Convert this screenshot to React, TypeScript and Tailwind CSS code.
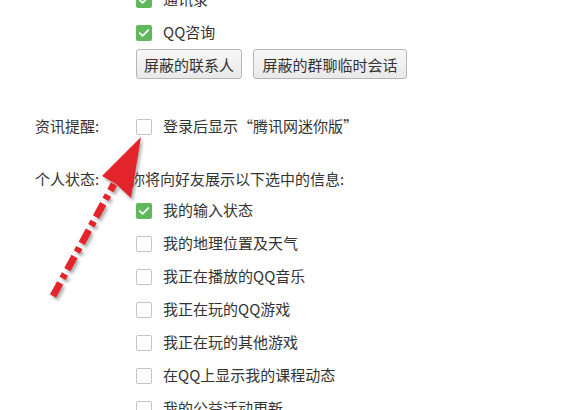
import { ReactNode } from "react";

const Box = ({ checked }: { checked?: boolean }) =>
  checked ? (
    <span className="flex h-[16px] w-[16px] shrink-0 items-center justify-center rounded-[2px] bg-[#5fb85c]">
      <svg viewBox="0 0 16 16" className="h-[14px] w-[14px]">
        <path d="M3.2 8.2 6.4 11.2 12.8 4.6" fill="none" stroke="#fff" strokeWidth="2" strokeLinecap="round" strokeLinejoin="round" />
      </svg>
    </span>
  ) : (
    <span className="h-[16px] w-[16px] shrink-0 rounded-[2px] border border-[#c4c4c4] bg-white" />
  );

const Row = ({ checked, children }: { checked?: boolean; children: ReactNode }) => (
  <div className="flex h-[33px] items-center gap-[11px]">
    <Box checked={checked} />
    <span>{children}</span>
  </div>
);

const status = [
  { label: "我的输入状态", checked: true },
  { label: "我的地理位置及天气" },
  { label: "我正在播放的QQ音乐" },
  { label: "我正在玩的QQ游戏" },
  { label: "我正在玩的其他游戏" },
  { label: "在QQ上显示我的课程动态" },
  { label: "我的公益活动更新" },
];

const App = () => {
  return (
    <div
      className="relative h-[410px] w-[580px] overflow-hidden bg-white text-[15px] text-[#333]"
      style={{ fontFamily: '"Noto Sans CJK SC", "Noto Sans", sans-serif' }}
    >
      <div className="ml-[136px] -mt-[17px]">
        <Row checked>通讯录</Row>
        <Row checked>QQ咨询</Row>
        <div className="flex gap-[11px]">
          <button className="h-[30px] w-[106px] rounded-[3px] border border-[#b5b5b5] bg-gradient-to-b from-[#f7f7f7] to-[#e9e9e9] leading-none">
            屏蔽的联系人
          </button>
          <button className="h-[30px] w-[154px] rounded-[3px] border border-[#b5b5b5] bg-gradient-to-b from-[#f7f7f7] to-[#e9e9e9] leading-none">
            屏蔽的群聊临时会话
          </button>
        </div>
      </div>

      <div className="mt-[31px] flex h-[33px] items-center pl-[35px]">
        <span className="w-[101px]">资讯提醒:</span>
        <Row>登录后显示“腾讯网迷你版”</Row>
      </div>

      <div className="mt-[20px] flex h-[33px] items-center pl-[35px]">
        <span className="w-[95px]">个人状态:</span>
        <span>你将向好友展示以下选中的信息:</span>
      </div>

      <div className="-mt-[2px] ml-[136px]">
        {status.map((s) => (
          <Row key={s.label} checked={s.checked}>
            {s.label}
          </Row>
        ))}
      </div>

      <svg className="pointer-events-none absolute left-0 top-0" width="580" height="410" viewBox="0 0 580 410">
        <defs>
          <filter id="sh" x="-20%" y="-20%" width="140%" height="140%">
            <feGaussianBlur stdDeviation="1.6" />
          </filter>
        </defs>
        <g transform="translate(2 3)" opacity="0.45" filter="url(#sh)">
          <line x1="53" y1="296" x2="114" y2="184" stroke="#555" strokeWidth="7" strokeDasharray="15 5 5 5" />
          <path d="M141 137 L102 176 L116 184 L131 198 Z" fill="#555" />
        </g>
        <line x1="53" y1="296" x2="114" y2="184" stroke="#e3242b" strokeWidth="7" strokeDasharray="15 5 5 5" />
        <path d="M141 137 L102 176 L116 184 L131 198 Z" fill="#e3242b" />
      </svg>
    </div>
  );
};

export default App;
